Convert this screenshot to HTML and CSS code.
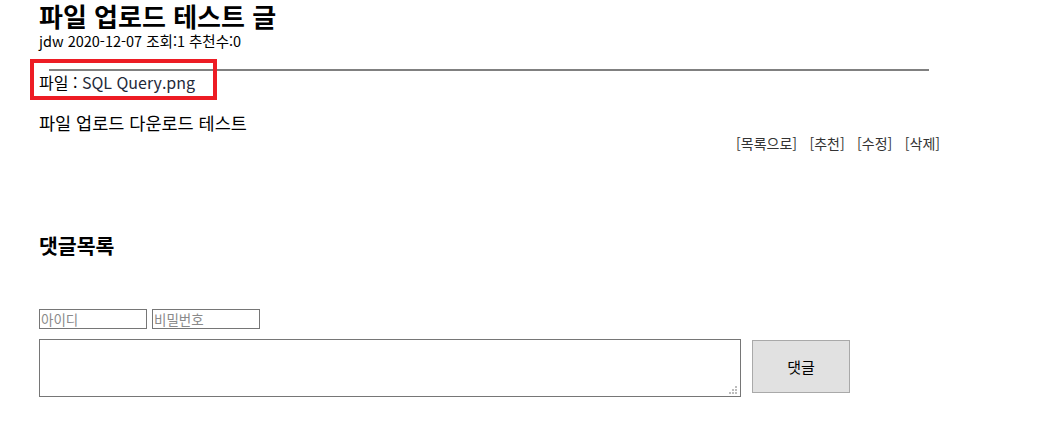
FILE: index.html
```html
<!DOCTYPE html>
<html lang="ko">
<head>
<meta charset="utf-8">
<title>파일 업로드 테스트 글</title>
<link rel="stylesheet" href="styles.css">
</head>
<body>
<div class="wrap">
  <h1 class="title">파일 업로드 테스트 글</h1>
  <div class="meta">jdw 2020-12-07 조회:1 추천수:0</div>
  <hr class="rule">
  <div class="file-row">
    파일 : <a class="file-link" href="#">SQL Query.png</a>
    <span class="mark"></span>
  </div>
  <div class="content">파일 업로드 다운로드 테스트</div>
  <div class="actions">
    <a href="#">[목록으로]</a>
    <a href="#">[추천]</a>
    <a href="#">[수정]</a>
    <a href="#">[삭제]</a>
  </div>
  <h3 class="comments-title">댓글목록</h3>
  <form class="comment-form">
    <div class="cred">
      <input type="text" class="field" placeholder="아이디">
      <input type="password" class="field" placeholder="비밀번호">
    </div>
    <div class="write">
      <div class="text-box">
        <textarea class="text"></textarea>
        <svg class="grip" width="8" height="8" viewBox="0 0 8 8" aria-hidden="true">
          <rect x="6" y="0" width="2" height="2"/>
          <rect x="3" y="3" width="2" height="2"/>
          <rect x="6" y="3" width="2" height="2"/>
          <rect x="0" y="6" width="2" height="2"/>
          <rect x="3" y="6" width="2" height="2"/>
          <rect x="6" y="6" width="2" height="2"/>
        </svg>
      </div>
      <button type="button" class="submit">댓글</button>
    </div>
  </form>
</div>
</body>
</html>
```

FILE: styles.css
```css
html, body {
  margin: 0;
  padding: 0;
  background: #fff;
}
body {
  font-family: "Noto Sans CJK KR", "Noto Sans", sans-serif;
  color: #000;
}
.wrap {
  padding-left: 39px;
  width: 901px;
}
.title {
  margin: 0;
  font-size: 26px;
  line-height: 32px;
  font-weight: 700;
}
.meta {
  font-size: 14.5px;
  line-height: 18px;
}
.rule {
  margin: 19px 0 0 10px;
  width: 880px;
  height: 0;
  border: 0;
  border-top: 2px solid #808080;
}
.file-row {
  position: relative;
  font-size: 16px;
  line-height: 22px;
}
.file-link {
  color: #1f2a3a;
  text-decoration: none;
}
.mark {
  position: absolute;
  left: -9px;
  top: -12px;
  width: 179px;
  height: 33px;
  border: 4px solid #ed1c24;
  pointer-events: none;
}
.content {
  margin-top: 20px;
  font-size: 17.5px;
  line-height: 20px;
}
.actions {
  text-align: right;
  font-size: 14px;
  line-height: 20px;
  word-spacing: 8.5px;
}
.actions a {
  color: #333;
  text-decoration: none;
}
.comments-title {
  margin: 80px 0 0;
  font-size: 20.5px;
  line-height: 24px;
  font-weight: 700;
}
.comment-form {
  margin-top: 52px;
}
.cred {
  display: flex;
  gap: 5px;
}
.field {
  box-sizing: border-box;
  width: 108px;
  height: 20px;
  margin: 0;
  padding: 0 1px;
  border: 1px solid #767676;
  font-family: inherit;
  font-size: 13.5px;
}
.field::placeholder {
  color: #8a8a8a;
}
.write {
  display: flex;
  align-items: flex-start;
  gap: 11px;
  margin-top: 10px;
}
.text-box {
  position: relative;
  width: 702px;
  height: 58px;
}
.text {
  display: block;
  box-sizing: border-box;
  width: 702px;
  height: 58px;
  margin: 0;
  border: 1px solid #767676;
  resize: none;
}
.grip {
  position: absolute;
  right: 4px;
  bottom: 3px;
  fill: #bdbdbd;
}
.submit {
  box-sizing: border-box;
  width: 98px;
  height: 53px;
  margin-top: 1px;
  border: 1px solid #a9a9a9;
  background: #e1e1e1;
  font-family: inherit;
  font-size: 15px;
  color: #000;
}
```
